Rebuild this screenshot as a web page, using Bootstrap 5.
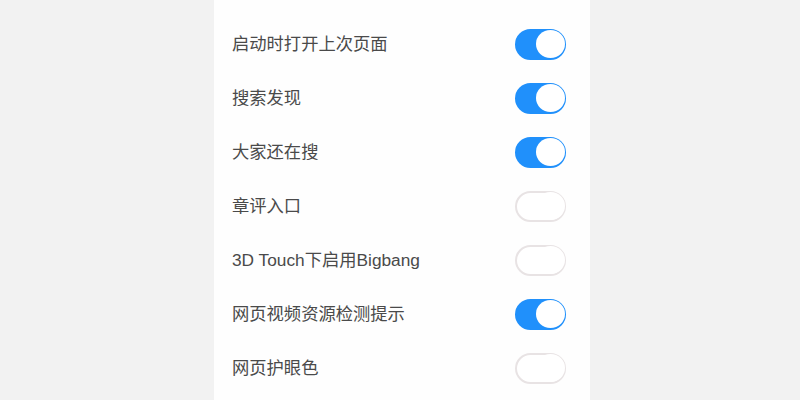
<!DOCTYPE html>
<html lang="zh">
<head>
<meta charset="utf-8">
<title>设置</title>
<link rel="stylesheet" href="https://cdn.jsdelivr.net/npm/bootstrap@5.3.0/dist/css/bootstrap.min.css">
<style>
html, body { height: 400px; overflow: hidden; background: #f2f2f2; }
.sheet { width: 376px; height: 400px; margin-left: 214px; background: #fefefe; padding-top: 17px; overflow: hidden; }
.set-row { height: 54px; padding: 0 24px 0 18px; background: transparent; border: 0; color: #4a4a4a; font-family: "Liberation Sans", "Noto Sans CJK SC", sans-serif; font-size: 17.3px; }
.set-label { padding-top: 2px; }
.tgl { display: block; width: 51px; height: 31px; border-radius: 16px; border: 2px solid #e8e3e4; background: #fff; position: relative; flex: none; }
.tgl::after { content: ""; position: absolute; top: -.5px; bottom: -.5px; right: -.5px; width: 29px; border-radius: 50%; background: #fff; }
.tgl.on { background: #2090fb; border-color: #2090fb; }
</style>
</head>
<body>
<div class="sheet">
  <div class="list-group list-group-flush">
    <div class="list-group-item set-row d-flex align-items-center justify-content-between"><span class="set-label">启动时打开上次页面</span><span class="tgl on"></span></div>
    <div class="list-group-item set-row d-flex align-items-center justify-content-between"><span class="set-label">搜索发现</span><span class="tgl on"></span></div>
    <div class="list-group-item set-row d-flex align-items-center justify-content-between"><span class="set-label">大家还在搜</span><span class="tgl on"></span></div>
    <div class="list-group-item set-row d-flex align-items-center justify-content-between"><span class="set-label">章评入口</span><span class="tgl"></span></div>
    <div class="list-group-item set-row d-flex align-items-center justify-content-between"><span class="set-label">3D Touch下启用Bigbang</span><span class="tgl"></span></div>
    <div class="list-group-item set-row d-flex align-items-center justify-content-between"><span class="set-label">网页视频资源检测提示</span><span class="tgl on"></span></div>
    <div class="list-group-item set-row d-flex align-items-center justify-content-between"><span class="set-label">网页护眼色</span><span class="tgl"></span></div>
  </div>
</div>
<script src="https://cdn.jsdelivr.net/npm/bootstrap@5.3.0/dist/js/bootstrap.bundle.min.js"></script>
</body>
</html>
